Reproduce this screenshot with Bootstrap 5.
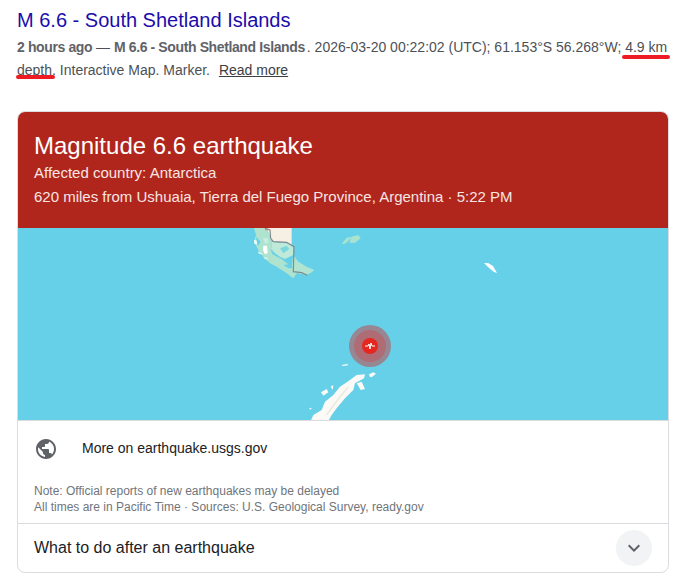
<!doctype html>
<html lang="en"><head><meta charset="utf-8"><title>M 6.6 - South Shetland Islands</title>
<link href="https://cdn.jsdelivr.net/npm/bootstrap@5.3.0/dist/css/bootstrap.min.css" rel="stylesheet">
<style>
html,body{background:#fff;margin:0;overflow:hidden}
body{font-family:"Liberation Sans",Arial,sans-serif;width:681px;height:580px}
.page-wrap{padding:8px 12px 0 17px;position:relative}
.res-title{display:block;font-size:20px;line-height:24px;color:#1a0dab;text-decoration:none;margin-bottom:4px}
.res-snippet{font-size:14px;line-height:23px;color:#4d5156;margin:0 0 29px;width:652px}
.res-snippet b{color:#5f6368;letter-spacing:-.38px}
.res-snippet b.lead-gap{margin-right:2px}
.res-snippet a{color:#3c4043;text-decoration:underline;margin-left:5px}
.mark-line{position:absolute;height:4px;background:#ed1c24;border-radius:2px}
.mark-a{left:622px;top:55px;width:48px}
.mark-b{left:16px;top:75px;width:39px}
.quake-card{border:1px solid #dadce0;border-radius:8px;overflow:hidden;width:652px;height:462px}
.quake-head{background:#b0261c;color:#fff;padding:18px 16px 0;height:116px}
.quake-head h2{font-size:24px;line-height:32px;font-weight:400;margin:0 0 -1px;font-family:inherit}
.quake-head p{font-size:15px;line-height:24px;margin:0;color:#f7e5e3}
.quake-map{display:block;height:192px;width:650px;background:#65d0e8}
.quake-link{height:56px;border-top:1px solid #dadce0;padding-left:16px;font-size:14px;color:#202124;gap:24px}
.quake-note{font-size:12px;line-height:16px;color:#70757a;padding:7px 16px 0;height:48px;border-bottom:1px solid #dadce0}
.quake-more{height:47px;padding:0 16px;font-size:16px;color:#202124}
.chev-btn{width:36px;height:36px;background:#f1f3f4;border-radius:50%}
</style></head>
<body>
<div class="page-wrap">
<a class="res-title" href="#">M 6.6 - South Shetland Islands</a>
<p class="res-snippet"><b>2 hours ago</b> — <b class="lead-gap">M 6.6 - South Shetland Islands</b>. 2026-03-20 00:22:02 (UTC); 61.153°S 56.268°W; 4.9 km depth. Interactive Map. Marker. <a href="#">Read more</a></p>
<div class="mark-line mark-a"></div><div class="mark-line mark-b"></div>
<div class="quake-card bg-white">
 <div class="quake-head">
  <h2>Magnitude 6.6 earthquake</h2>
  <p>Affected country: Antarctica</p>
  <p>620 miles from Ushuaia, Tierra del Fuego Province, Argentina · 5:22 PM</p>
 </div>
 <svg class="quake-map" viewBox="0 0 650 192" aria-label="Map">
  <rect width="650" height="192" fill="#65d0e8"/>
  <g transform="translate(212,-3) scale(.3333)">
   <path d="M110 9H185V62L170 52L130 50L122 40Z" fill="#f6efe3"/>
   <path d="M72 9L78 30L72 50L85 75L100 95L120 115L140 125L170 145L190 160L200 145L190 130L165 110L140 90L125 70L125 48L110 9Z" fill="#aee3cf"/>
   <path d="M125 50L170 55L190 65L190 90L165 102L150 95L135 85L125 70Z" fill="#bfe9d8"/>
   <path d="M190 90L205 110L230 125L253 135L245 142L230 150L190 142L185 130L188 100Z" fill="#b0e4d0"/>
   <path d="M120 72L150 98L165 105L150 100L128 88Z" fill="#65d0e8"/>
   <path d="M160 120L180 118L188 130L176 130Z" fill="#65d0e8"/>
   <path d="M150 70L170 62L178 72L160 85Z" fill="#7dd8de"/>
   <path d="M78 35L92 50L85 62L80 50Z" fill="#65d0e8"/>
   <path d="M98 40L112 38L116 52L106 56Z" fill="#c8ecdf"/>
   <path d="M100 62H111L113 85L104 87L99 75Z" fill="#fff"/>
   <path d="M72 45L80 47L80 58L74 57Z" fill="#fff"/>
   <path d="M83 79L96 85L97 89L87 86Z" fill="#e3f6f0"/>
   <path d="M100 96L112 98L114 105L103 101Z" fill="#d8f2ea"/>
   <path d="M104 9h8l1 8h-7Z" fill="#d8a9a0"/>
   <path d="M105 10L120 15L122 40L130 50L170 52L192 65L190 140L215 143L232 151" fill="none" stroke="#808b8d" stroke-width="3.500"/>
   <path d="M335 56L350 38L365 35L355 48L345 56Z" fill="#a9e3cf"/>
   <path d="M358 53L365 35L385 30L392 40L375 53Z" fill="#a9e3cf"/>
  </g>
  <path d="M466 35 L470 35 L475 38 L479 45 L476 44 L471 40Z" fill="#fff"/>
  <circle cx="352" cy="118" r="21" fill="#a96b72" fill-opacity=".72"/>
  <circle cx="352" cy="118" r="16" fill="#c2565c" fill-opacity=".55"/>
  <circle cx="352" cy="118" r="8" fill="#e5271f"/>
  <path d="M347 118 H350 L351 116 L352 121 L353 115 L354 118 H357" fill="none" stroke="#fff" stroke-width="1"/>
  <g transform="translate(272,87) scale(.3333)" fill="#fbfaf7">
   <path d="M62 318L70 300L95 285L105 260L130 240L150 215L180 195L200 180L225 178L222 190L195 205L190 225L165 250L140 280L125 300L115 318Z"/>
   <path d="M110 300L135 265L175 215" fill="none" stroke="#ecebdd" stroke-width="5"/>
   <path d="M155 150L172 147L175 151L158 153Z"/>
   <path d="M237 178L250 172L258 176L245 187L240 186Z"/>
   <path d="M200 205L215 200L225 222L212 225Z"/>
   <path d="M93 232L110 222L115 232L100 242Z"/>
   <path d="M122 215L130 210L128 225Z"/>
   <path d="M58 280L66 278L60 285Z"/>
  </g>
 </svg>
 <div class="quake-link d-flex align-items-center">
  <svg width="24" height="24" viewBox="0 0 24 24" fill="#5f6368"><path d="M12 2C6.480 2 2 6.480 2 12s4.480 10 10 10 10-4.480 10-10S17.520 2 12 2zm-1 17.930c-3.950-.49-7-3.850-7-7.930 0-.62.080-1.210.21-1.790L9 15v1c0 1.100.9 2 2 2v1.930zm6.900-2.540c-.26-.81-1-1.390-1.900-1.390h-1v-3c0-.55-.45-1-1-1H8v-2h2c.55 0 1-.45 1-1V7h2c1.100 0 2-.9 2-2v-.41c2.930 1.190 5 4.060 5 7.410 0 2.080-.8 3.970-2.100 5.390z"/></svg>
  <span>More on earthquake.usgs.gov</span>
 </div>
 <div class="quake-note">Note: Official reports of new earthquakes may be delayed<br>All times are in Pacific Time · Sources: U.S. Geological Survey, ready.gov</div>
 <div class="quake-more d-flex align-items-center justify-content-between">
  <span>What to do after an earthquake</span>
  <span class="chev-btn d-flex align-items-center justify-content-center"><svg width="24" height="24" viewBox="0 0 24 24" fill="#5f6368"><path d="M16.590 8.590 12 13.170 7.410 8.590 6 10l6 6 6-6z"/></svg></span>
 </div>
</div>
</div>
</body></html>
